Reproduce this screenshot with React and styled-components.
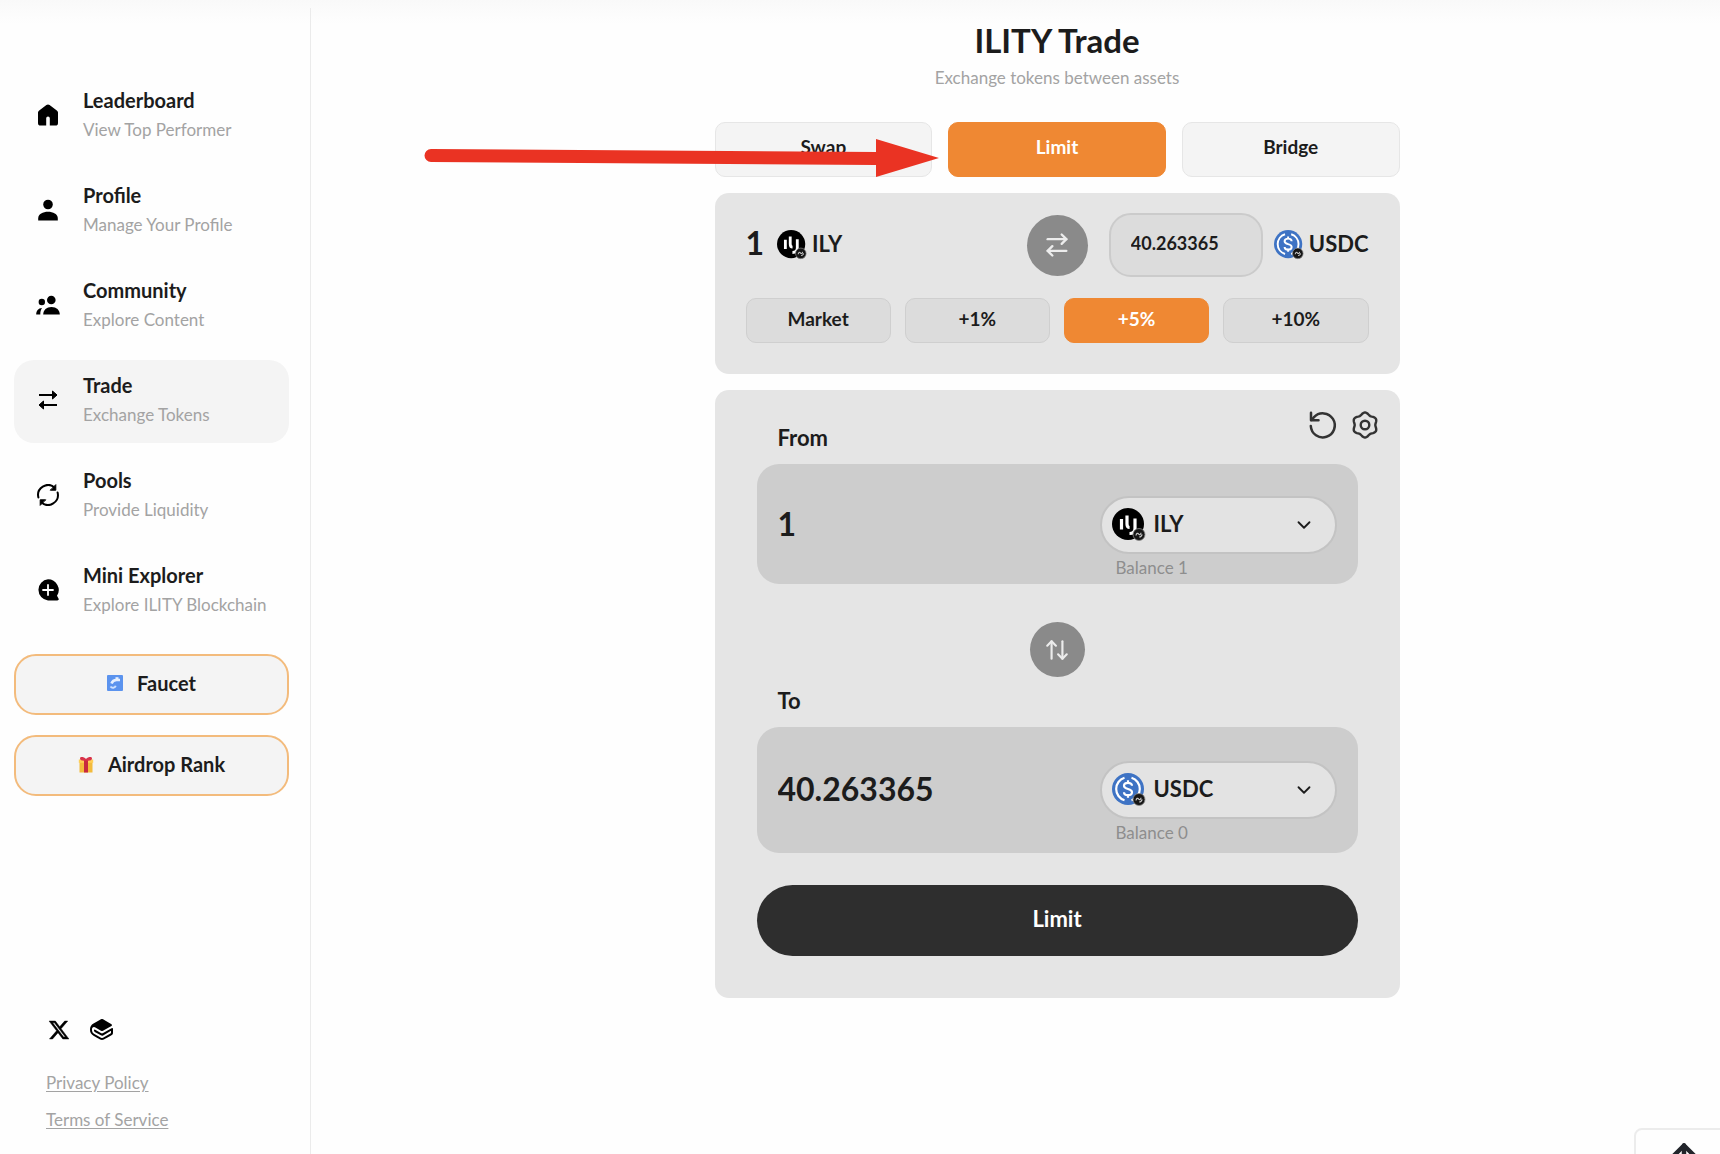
import React, { useState } from 'react';
import styled, { createGlobalStyle } from 'styled-components';
import { ArrowRightLeft, ArrowUp, ArrowUpDown, ChevronDown } from 'lucide-react';
import { RiTwitterXFill } from 'react-icons/ri';
import { SiGitbook } from 'react-icons/si';

// Icons

const HomeIcon = () => (
  <svg width="22" height="22" viewBox="0 0 22 22" aria-hidden="true">
    <path d="M9.4 1a2.6 2.6 0 0 1 3.2 0l7.2 5.4A2.6 2.6 0 0 1 21 8.6V19a2.6 2.6 0 0 1-2.6 2.6h-5.6v-7.4a1.8 1.8 0 0 0-3.6 0v7.4H3.6A2.6 2.6 0 0 1 1 19V8.6a2.6 2.6 0 0 1 1.2-2.2z" />
  </svg>
)

const PersonIcon = () => (
  <svg width="22" height="22" viewBox="0 0 22 22" aria-hidden="true">
    <circle cx="11" cy="5.5" r="4.8" />
    <path d="M1.2 21.5v-2C1.2 15 6 12.8 11 12.8s9.8 2.2 9.8 6.7v2z" />
  </svg>
)

const PeopleIcon = () => (
  <svg width="24" height="20" viewBox="0 0 24 20" aria-hidden="true">
    <circle cx="15.3" cy="5" r="4.3" />
    <circle cx="5.8" cy="7" r="3.2" />
    <path d="M7.2 19.5c0-4.5 3.4-7.5 8.3-7.5s8.300 3 8.300 7.500z" />
    <path d="M.2 19.5c0-3.500 2-6.300 5.800-6.500-1.300 1.800-1.700 3.800-1.700 6.500z" />
  </svg>
)

const TradeIcon = () => (
  <svg width="20" height="20" viewBox="0 0 20 20" fill="none" stroke="#000" strokeWidth="2" strokeLinejoin="round" aria-hidden="true">
    <path d="M1 5h17M19 15H2" />
    <path d="M14.500 1 19 5l-4.500 4zM5.500 11 1 15l4.500 4z" fill="#000" strokeWidth="1" />
  </svg>
)

const PoolsIcon = () => (
  <svg width="22" height="22" viewBox="0 0 22 22" fill="none" stroke="#000" strokeWidth="2" strokeLinecap="round" aria-hidden="true">
    <path d="M1.400 13.500A10 10 0 0 1 17.500 3.400M20.600 8.500A10 10 0 0 1 4.500 18.600" />
    <path d="M18.800 1v5.200h-5.200zM3.200 21v-5.200h5.200z" fill="#000" strokeWidth="1" strokeLinejoin="round" />
  </svg>
)

const ExplorerIcon = () => (
  <svg width="22" height="22" viewBox="0 0 22 22" aria-hidden="true">
    <path d="M11 .3a10.700 10.700 0 0 1 9 16.500l1.500 2.600c.6 1.200 0 2-1.200 2H11A10.600 10.600 0 0 1 11 .3z" />
    <path d="M11 6v10M6 11h10" stroke="#fff" strokeWidth="1.8" strokeLinecap="round" />
  </svg>
)

const FaucetIcon = () => (
  <svg width="16" height="16" viewBox="0 0 16 16" aria-hidden="true">
    <rect width="16" height="16" rx="1" fill="#5b93ee" />
    <path d="M4.500 8.500C5.500 5.500 7.500 5 9.500 5h3.500" stroke="#e6f0ff" strokeWidth="2.600" fill="none" />
    <path d="M8.500 2.200h3v2h-3z" fill="#e6f0ff" />
    <path d="M3.500 11.500c1.500 2 4.500 1.500 5.200-.8" stroke="#cfe2ff" strokeWidth="2" fill="none" />
  </svg>
)

const GiftIcon = () => (
  <svg width="16" height="17" viewBox="0 0 16 17" aria-hidden="true">
    <path d="M1.500 6h13v10.500h-13z" fill="#f3bb3c" />
    <path d="M.8 3.500h14.400v3.300H.8z" fill="#ffce55" />
    <path d="M6 3.500h4v13H6z" fill="#c8283e" />
    <path d="M8 4.500C5 5 2 4.500 2 2.500S5.500.5 8 3c2.500-2.500 6-2.500 6-.5s-3 2.500-6 2z" fill="#d8334a" />
  </svg>
)

const ResetIcon = () => (
  <svg width="30" height="30" viewBox="0 0 30 30" fill="none" stroke="currentColor" strokeWidth="2.500" strokeLinecap="round" strokeLinejoin="round" aria-hidden="true">
    <path d="M2.800 16A12 12 0 1 0 6 7.200L3.500 10" />
    <path d="M3 2.800v7.500h7.500" />
  </svg>
)

// six shallow lobes round a circle, one of them pointing up
const gearPoints = Array.from({ length: 72 }, (_, i) => {
  const angle = (i / 72) * Math.PI * 2
  const radius = 11.4 + 1.1 * Math.cos(6 * angle)
  return `${(15 + radius * Math.sin(angle)).toFixed(2)},${(15 - radius * Math.cos(angle)).toFixed(2)}`
}).join(' ')

const GearIcon = () => (
  <svg width="30" height="30" viewBox="0 0 30 30" fill="none" stroke="currentColor" strokeWidth="2.400" strokeLinejoin="round" aria-hidden="true">
    <polygon points={gearPoints} />
    <circle cx="15" cy="15" r="4.300" />
  </svg>
)

const ChainBadge = () => (
  <g>
    <circle cx="27" cy="26.500" r="6" fill="#161616" stroke="#8c8c8c" strokeWidth=".8" />
    <path d="M24 27.500c.3-2.300 1.800-2.800 2.600-1.500s2.300.6 2.400-1.200M27.200 29c1.500 0 2.600-1 2.900-2.600" stroke="#c4c4c4" strokeWidth="1.200" fill="none" />
  </g>
)

const IlyLogo = ({ size }) => (
  <svg width={size} height={size} viewBox="0 0 34 34" aria-hidden="true">
    <circle cx="16" cy="16" r="16" fill="#000" />
    <g stroke="#fff" strokeWidth="3.200" fill="none">
      <path d="M9.500 11v10.500M15 7.500v8.500c0 2.500 1 3.500 2.600 3.500" />
      <path d="M23 10.500v10c0 3.200-2 5-5.500 5" />
    </g>
    <ChainBadge />
  </svg>
)

const UsdcLogo = ({ size }) => (
  <svg width={size} height={size} viewBox="0 0 34 34" aria-hidden="true">
    <circle cx="16" cy="16" r="16" fill="#3e73c4" />
    <g stroke="#fff" strokeWidth="2.200" fill="none">
      <path d="M12.500 4.800a11.700 11.700 0 0 0 0 22.400M19.500 4.800a11.700 11.700 0 0 1 0 22.400" />
      <path d="M20 12.800c0-2-1.600-3-4-3s-4 1-4 3c0 4.400 8 2 8 6.400 0 2-1.600 3-4 3s-4-1-4-3M16 7.300v2.500M16 22.200v2.500" />
    </g>
    <ChainBadge />
  </svg>
)

const logos = { ILY: IlyLogo, USDC: UsdcLogo }

const navItems = [
  { title: 'Leaderboard', text: 'View Top Performer', Icon: HomeIcon },
  { title: 'Profile', text: 'Manage Your Profile', Icon: PersonIcon },
  { title: 'Community', text: 'Explore Content', Icon: PeopleIcon },
  { title: 'Trade', text: 'Exchange Tokens', Icon: TradeIcon },
  { title: 'Pools', text: 'Provide Liquidity', Icon: PoolsIcon },
  { title: 'Mini Explorer', text: 'Explore ILITY Blockchain', Icon: ExplorerIcon },
]

const TokenPicker = ({ label, token, onChange, balance }) => {
  const Logo = logos[token]
  return (
    <StyPicker>
      <StyPill>
        <Logo size={34} />
        <select aria-label={label} value={token} onChange={(e) => onChange(e.target.value)}>
          <option>ILY</option>
          <option>USDC</option>
        </select>
        <ChevronDown size={22} strokeWidth={2} />
      </StyPill>
      <StyBalance>Balance {balance}</StyBalance>
    </StyPicker>
  )
}

const App = () => {
  const [mode, setMode] = useState('Limit')
  const [rate, setRate] = useState('+5%')
  const [price, setPrice] = useState('40.263365')
  const [from, setFrom] = useState('1')
  const [to, setTo] = useState('40.263365')
  const [fromToken, setFromToken] = useState('ILY')
  const [toToken, setToToken] = useState('USDC')

  const flip = () => {
    setFromToken(toToken)
    setToToken(fromToken)
  }

  return (
    <StyPage>
      <GlobalStyle />
      <StySidebar>
        <StyNav>
          {navItems.map(({ title, text, Icon }) => (
            <StyNavItem href="#" key={title} $active={title === 'Trade'}>
              <StyNavIcon><Icon /></StyNavIcon>
              <span>
                <StyNavTitle>{title}</StyNavTitle>
                <StyNavText>{text}</StyNavText>
              </span>
            </StyNavItem>
          ))}
        </StyNav>
        <StyExtras>
          <StyExtraButton><FaucetIcon />Faucet</StyExtraButton>
          <StyExtraButton><GiftIcon />Airdrop Rank</StyExtraButton>
        </StyExtras>
        <StyFooter>
          <StySocial>
            <a href="#" aria-label="X"><RiTwitterXFill size={24} stroke="#000" strokeWidth={0.5} /></a>
            <a href="#" aria-label="GitBook"><SiGitbook size={23} /></a>
          </StySocial>
          <StyFooterLink href="#">Privacy Policy</StyFooterLink>
          <StyFooterLink href="#">Terms of Service</StyFooterLink>
        </StyFooter>
      </StySidebar>

      <StyMain>
        <StyTrade>
          <StyTitle>ILITY Trade</StyTitle>
          <StySubtitle>Exchange tokens between assets</StySubtitle>
          <StyTabs>
            {['Swap', 'Limit', 'Bridge'].map((name) => (
              <StyTab key={name} $active={mode === name} onClick={() => setMode(name)}>{name}</StyTab>
            ))}
          </StyTabs>

          <StyPriceCard>
            <StyPriceRow>
              <StyToken><StyBig>1</StyBig><IlyLogo size={30} /><StyTokenName>ILY</StyTokenName></StyToken>
              <StyRound $size={61} aria-label="Invert price"><ArrowRightLeft size={28} strokeWidth={2} /></StyRound>
              <StyQuote>
                <StyPriceInput aria-label="Limit price" value={price} onChange={(e) => setPrice(e.target.value)} />
                <StyToken><UsdcLogo size={30} /><StyTokenName>USDC</StyTokenName></StyToken>
              </StyQuote>
            </StyPriceRow>
            <StyRates>
              {['Market', '+1%', '+5%', '+10%'].map((name) => (
                <StyRate key={name} $active={rate === name} onClick={() => setRate(name)}>{name}</StyRate>
              ))}
            </StyRates>
          </StyPriceCard>

          <StySwapCard>
            <StyCardHead>
              <StyLabel htmlFor="from">From</StyLabel>
              <StyTools>
                <button aria-label="Reset"><ResetIcon /></button>
                <button aria-label="Settings"><GearIcon /></button>
              </StyTools>
            </StyCardHead>
            <StyAmount>
              <StyAmountInput id="from" value={from} onChange={(e) => setFrom(e.target.value)} />
              <TokenPicker label="From token" token={fromToken} onChange={setFromToken} balance="1" />
            </StyAmount>
            <StyFlip>
              <StyRound $size={55} aria-label="Flip tokens" onClick={flip}><ArrowUpDown size={26} strokeWidth={2} /></StyRound>
            </StyFlip>
            <StyLabel htmlFor="to">To</StyLabel>
            <StyAmount $tall>
              <StyAmountInput id="to" value={to} onChange={(e) => setTo(e.target.value)} />
              <TokenPicker label="To token" token={toToken} onChange={setToToken} balance="0" />
            </StyAmount>
            <StySubmit>Limit</StySubmit>
          </StySwapCard>
        </StyTrade>
      </StyMain>

      <StyPointer width="516" height="42" viewBox="0 0 516 42" aria-hidden="true">
        <path d="M7 11 452 14V1l63 19-63 19V27L7 24a6.500 6.500 0 0 1 0-13z" fill="#ea3323" />
      </StyPointer>
      <StyToTop aria-label="Back to top"><ArrowUp size={36} strokeWidth={3} /></StyToTop>
    </StyPage>
  )
}

export default App;

const GlobalStyle = createGlobalStyle`
  body {
    margin: 0;
    background: #fefefe;
    color: #1c1c1c;
    font-family: Lato, "Open Sans", sans-serif;
  }
  *, *::before, *::after {
    box-sizing: border-box;
  }
  button, input, select {
    font-family: inherit;
    color: inherit;
  }
  button {
    cursor: pointer;
  }
  svg {
    flex-shrink: 0;
  }
`
const StyPage = styled.div`
  display: flex;
  min-height: 100vh;
  overflow: hidden;
  position: relative;
  background: linear-gradient(#f9f9f9, #fefefe 24px);
`
const StySidebar = styled.aside`
  width: 311px;
  flex-shrink: 0;
  margin-top: 8px;
  padding: 67px 21px 22px 14px;
  border-right: 1px solid #ebebeb;
  display: flex;
  flex-direction: column;
`
const StyNav = styled.nav`
  display: flex;
  flex-direction: column;
  gap: 12px;
`
const StyNavItem = styled.a`
  height: 83px;
  display: flex;
  align-items: center;
  gap: 2px;
  padding-bottom: 3px;
  border-radius: 20px;
  color: inherit;
  text-decoration: none;
  background: ${props => props.$active ? '#f4f4f4' : 'transparent'};
`
const StyNavIcon = styled.span`
  width: 67px;
  display: flex;
  justify-content: center;
`
const StyNavTitle = styled.span`
  display: block;
  font-size: 20px;
  font-weight: 700;
  line-height: 29px;
`
const StyNavText = styled.span`
  display: block;
  font-size: 17px;
  line-height: 29px;
  color: #a3a3a3;
`
const StyExtras = styled.div`
  display: flex;
  flex-direction: column;
  gap: 20px;
  margin-top: 21px;
`
const StyExtraButton = styled.button`
  height: 61px;
  display: flex;
  align-items: center;
  justify-content: center;
  gap: 14px;
  padding: 0 0 3px;
  border: 2px solid #f3bb7c;
  border-radius: 22px;
  background: #f4f4f4;
  font-size: 20px;
  font-weight: 700;
`
const StyFooter = styled.footer`
  margin-top: auto;
  padding-left: 32px;
  display: flex;
  flex-direction: column;
  align-items: flex-start;
  gap: 12px;
`
const StySocial = styled.div`
  display: flex;
  gap: 19px;
  padding-left: 1px;
  margin-bottom: 16px;
  a {
    display: flex;
    color: #000;
  }
`
const StyFooterLink = styled.a`
  font-size: 17px;
  line-height: 25px;
  color: #a3a3a3;
  text-underline-offset: 2px;
`
const StyMain = styled.main`
  flex: 1;
  min-width: 0;
  padding: 20px 0 40px 83px;
`
const StyTrade = styled.div`
  width: 100%;
  max-width: 685px;
  margin: 0 auto;
`
const StyTitle = styled.h1`
  margin: 0;
  font-size: 33px;
  line-height: 40px;
  font-weight: 700;
  text-align: center;
`
const StySubtitle = styled.p`
  margin: 5px 0 32px;
  font-size: 17px;
  line-height: 25px;
  color: #a3a3a3;
  text-align: center;
`
const StyTabs = styled.div`
  display: grid;
  grid-template-columns: repeat(3, 1fr);
  gap: 16px;
`
const StyTab = styled.button`
  height: 55px;
  padding: 0 0 6px;
  border: 1px solid ${props => props.$active ? '#ef8833' : '#e6e6e6'};
  border-radius: 10px;
  background: ${props => props.$active ? '#ef8833' : '#f4f4f4'};
  color: ${props => props.$active ? '#fff' : '#1c1c1c'};
  font-size: 19px;
  font-weight: 700;
`
const StyCard = styled.section`
  margin-top: 16px;
  border-radius: 14px;
  background: #e5e5e5;
`
const StyPriceCard = styled(StyCard)`
  padding: 20px 31px 31px;
`
const StyPriceRow = styled.div`
  display: grid;
  grid-template-columns: 1fr auto 1fr;
  align-items: center;
`
const StyToken = styled.span`
  display: flex;
  align-items: center;
  gap: 5px;
`
const StyTokenName = styled.span`
  padding-bottom: 3px;
  font-size: 22px;
  font-weight: 700;
`
const StyBig = styled.span`
  margin-right: 8px;
  padding-bottom: 5px;
  font-size: 32px;
  font-weight: 700;
`
const StyRound = styled.button`
  width: ${props => props.$size}px;
  height: ${props => props.$size}px;
  display: flex;
  align-items: center;
  justify-content: center;
  padding: 0;
  border: none;
  border-radius: 50%;
  background: #8a8a8a;
  color: #ececec;
`
const StyQuote = styled.div`
  display: flex;
  align-items: center;
  justify-content: flex-end;
  gap: 11px;
`
const StyPriceInput = styled.input`
  width: 154px;
  height: 64px;
  padding: 0 20px 5px;
  border: 2px solid #cbcbcb;
  border-radius: 22px;
  background: #dcdcdc;
  font-size: 18px;
  font-weight: 700;
`
const StyRates = styled.div`
  display: grid;
  grid-template-columns: repeat(4, 1fr);
  gap: 14px;
  margin-top: 21px;
`
const StyRate = styled.button`
  height: 45px;
  padding: 0 0 5px;
  border: 1px solid ${props => props.$active ? '#ef8833' : '#cfcfcf'};
  border-radius: 10px;
  background: ${props => props.$active ? '#ef8833' : '#dcdcdc'};
  color: ${props => props.$active ? '#fff' : '#1c1c1c'};
  font-size: 19px;
  font-weight: 700;
`
const StySwapCard = styled(StyCard)`
  padding: 20px 42px 42px;
`
const StyCardHead = styled.div`
  display: flex;
  justify-content: space-between;
  padding-top: 4px;
`
const StyLabel = styled.label`
  display: block;
  padding: 8px 0 10px 21px;
  font-size: 22px;
  line-height: 32px;
  font-weight: 700;
`
const StyTools = styled.div`
  display: flex;
  gap: 12px;
  margin: -4px -22px 0 0;
  button {
    height: 30px;
    padding: 0;
    border: none;
    background: none;
    color: #333;
  }
`
const StyAmount = styled.div`
  display: flex;
  justify-content: space-between;
  height: ${props => props.$tall ? 126 : 120}px;
  padding: ${props => props.$tall ? 34 : 32}px 21px 0;
  border-radius: 22px;
  background: #cdcdcd;
`
const StyAmountInput = styled.input`
  flex: 1;
  min-width: 0;
  height: 54px;
  padding: 0;
  border: none;
  background: none;
  font-size: 32px;
  font-weight: 700;
`
const StyPicker = styled.div`
  width: 237px;
`
const StyPill = styled.div`
  height: 58px;
  display: flex;
  align-items: center;
  gap: 8px;
  padding: 0 20px 0 10px;
  border: 2px solid #c3c3c3;
  border-radius: 29px;
  background: #e3e3e3;
  select {
    flex: 1;
    min-width: 0;
    padding: 0 0 3px;
    border: none;
    background: none;
    appearance: none;
    font-size: 22px;
    font-weight: 700;
  }
`
const StyBalance = styled.div`
  padding-left: 16px;
  font-size: 17px;
  line-height: 28px;
  color: #8e8e8e;
`
const StyFlip = styled.div`
  display: flex;
  justify-content: center;
  padding: 38px 0 0;
`
const StySubmit = styled.button`
  width: 100%;
  height: 71px;
  margin-top: 32px;
  padding: 0 0 4px;
  border: none;
  border-radius: 36px;
  background: #2e2e2e;
  color: #fff;
  font-size: 22px;
  font-weight: 700;
`
const StyPointer = styled.svg`
  position: absolute;
  left: 424px;
  top: 138px;
  pointer-events: none;
`
const StyToTop = styled.button`
  position: absolute;
  right: -14px;
  bottom: -72px;
  width: 100px;
  height: 98px;
  display: flex;
  justify-content: center;
  padding: 8px 0 0;
  border: 2px solid #ececec;
  border-radius: 8px;
  background: #fefefe;
  color: #22252b;
`
